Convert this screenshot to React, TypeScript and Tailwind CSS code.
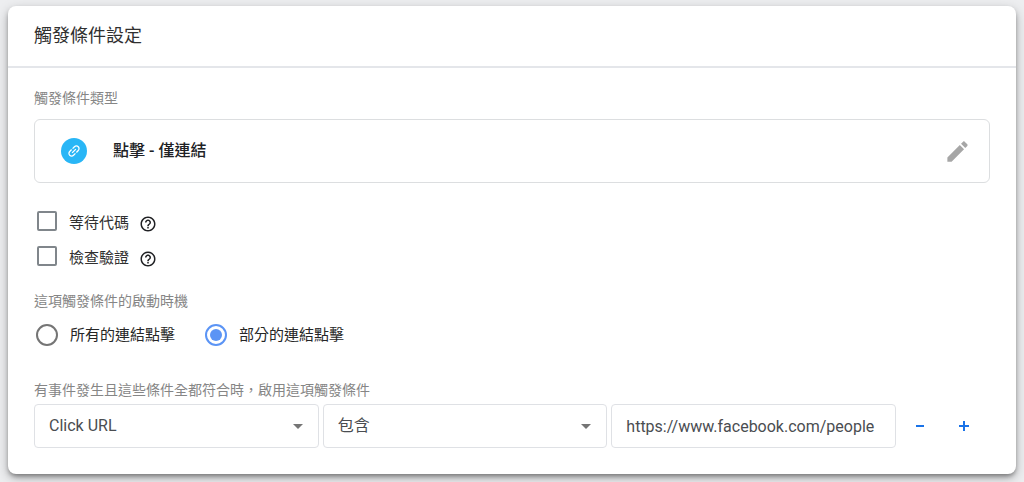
import { useState } from "react";
import type { ReactNode } from "react";

function HelpIcon() {
  return (
    <svg className="mt-0.5 size-[18px] text-[#202124]" viewBox="0 0 24 24" fill="currentColor" aria-hidden="true">
      <path d="M11 18h2v-2h-2v2zm1-16C6.48 2 2 6.48 2 12s4.48 10 10 10 10-4.48 10-10S17.52 2 12 2zm0 18c-4.41 0-8-3.59-8-8s3.59-8 8-8 8 3.59 8 8-3.59 8-8 8zm0-14c-2.21 0-4 1.79-4 4h2c0-1.1.9-2 2-2s2 .9 2 2c0 2-3 1.75-3 5h2c0-2.25 3-2.5 3-5 0-2.21-1.79-4-4-4z" />
    </svg>
  );
}

function SectionLabel({ children }: { children: ReactNode }) {
  return <h2 className="text-sm leading-5 text-[#868686]">{children}</h2>;
}

function CheckRow({ id, label }: { id: string; label: string }) {
  return (
    <div className="flex h-[35px] items-center pl-[3px]">
      <input
        id={id}
        type="checkbox"
        className="mb-1 size-5 shrink-0 appearance-none rounded-xs border-2 border-[#80868b] bg-white checked:bg-[#5b94f5]"
      />
      <label htmlFor={id} className="pl-3 text-[15px] leading-6 text-[#303030]">
        {label}
      </label>
      <button type="button" aria-label={`${label}說明`} className="ml-2.5">
        <HelpIcon />
      </button>
    </div>
  );
}

type RadioProps = { id: string; label: string; checked: boolean; onChange: () => void };

function RadioItem({ id, label, checked, onChange }: RadioProps) {
  return (
    <div className="flex items-center">
      <input
        id={id}
        type="radio"
        name="fire-on"
        checked={checked}
        onChange={onChange}
        className="grid size-[22px] shrink-0 appearance-none place-items-center rounded-full border-2 border-[#757575] bg-white before:hidden before:size-3 before:rounded-full before:bg-[#5b94f5] before:content-[''] checked:border-[#5b94f5] checked:before:block"
      />
      <label htmlFor={id} className="pl-3 text-[15px] leading-6 text-[#262626]">
        {label}
      </label>
    </div>
  );
}

function SelectField({ label, options }: { label: string; options: string[] }) {
  return (
    <div className="relative">
      <select
        aria-label={label}
        className="h-11 w-full appearance-none rounded-sm border border-[#dfe1e5] bg-white pr-10 pl-3.5 text-base text-[#4a4d51]"
      >
        {options.map((o) => (
          <option key={o}>{o}</option>
        ))}
      </select>
      <svg className="pointer-events-none absolute top-5 right-4 h-[5px] w-2.5 text-[#757575]" viewBox="0 0 10 5" fill="currentColor" aria-hidden="true">
        <path d="M0 0h10L5 5z" />
      </svg>
    </div>
  );
}

export default function App() {
  const [fireOn, setFireOn] = useState<"all" | "some">("some");
  const [url, setUrl] = useState("https://www.facebook.com/people");

  return (
    <div className="min-h-screen bg-[#edeef0] px-2 pt-1.5 pb-2 font-['Roboto','Noto_Sans_CJK_TC',sans-serif]">
      <main className="rounded-lg bg-white pb-[26px] shadow-[0_3px_5px_-1px_rgba(0,0,0,0.4),0_4px_12px_rgba(0,0,0,0.25)]">
        <header className="border-b-2 border-[#e4e6ea] px-[26px] py-4">
          <h1 className="text-lg leading-7 text-[#303030]">觸發條件設定</h1>
        </header>

        <form className="px-[26px] pt-5" onSubmit={(e) => e.preventDefault()}>
          <SectionLabel>觸發條件類型</SectionLabel>
          <div className="mt-[11px] flex h-16 items-center rounded-md border border-[#dcdee0] pr-[18px] pl-[26px]">
            <span className="flex size-[26px] items-center justify-center rounded-full bg-[#29b6f6]">
              <svg className="size-4 -rotate-45 text-white" viewBox="0 0 24 24" fill="currentColor" aria-hidden="true">
                <path d="M3.9 12c0-1.71 1.39-3.1 3.1-3.1h4V7H7c-2.76 0-5 2.24-5 5s2.24 5 5 5h4v-1.9H7c-1.71 0-3.1-1.39-3.1-3.1zM8 13h8v-2H8v2zm9-6h-4v1.9h4c1.71 0 3.1 1.39 3.1 3.1s-1.39 3.1-3.1 3.1h-4V17h4c2.76 0 5-2.24 5-5s-2.24-5-5-5z" />
              </svg>
            </span>
            <span className="flex-1 pl-[26px] text-base font-medium text-[#202124]">點擊 - 僅連結</span>
            <button type="button" aria-label="編輯觸發條件類型">
              <svg className="size-[27px] text-[#a6a6a6]" viewBox="0 0 24 24" fill="currentColor" aria-hidden="true">
                <path d="M3 17.25V21h3.75L17.81 9.94l-3.75-3.75L3 17.25zM20.71 7.04c.39-.39.39-1.02 0-1.41l-2.34-2.34c-.39-.39-1.02-.39-1.41 0l-1.83 1.83 3.75 3.75 1.83-1.83z" />
              </svg>
            </button>
          </div>

          <div className="mt-[22px]">
            <CheckRow id="wait-for-tags" label="等待代碼" />
            <CheckRow id="check-validation" label="檢查驗證" />
          </div>

          <div className="mt-4">
            <SectionLabel>這項觸發條件的啟動時機</SectionLabel>
            <div className="mt-3 flex gap-[30px] pl-0.5">
              <RadioItem id="fire-all" label="所有的連結點擊" checked={fireOn === "all"} onChange={() => setFireOn("all")} />
              <RadioItem id="fire-some" label="部分的連結點擊" checked={fireOn === "some"} onChange={() => setFireOn("some")} />
            </div>
          </div>

          <div className="mt-[33px]">
            <SectionLabel>有事件發生且這些條件全都符合時，啟用這項觸發條件</SectionLabel>
            <div className="mt-1 flex items-center">
              <div className="grid flex-1 grid-cols-3 gap-1">
                <SelectField label="變數" options={["Click URL", "Click Text", "Page URL"]} />
                <SelectField label="運算子" options={["包含", "等於", "開頭為"]} />
                <input
                  type="text"
                  aria-label="值"
                  value={url}
                  onChange={(e) => setUrl(e.target.value)}
                  className="h-11 w-full rounded-sm border border-[#dfe1e5] bg-white px-3.5 text-base text-[#4a4d51]"
                />
              </div>
              <div className="flex pr-1 pl-0.5">
                <button type="button" aria-label="移除條件" className="flex h-11 w-11 items-center justify-center text-[#1a73e8]">
                  <svg className="size-2.5" viewBox="0 0 10 10" fill="currentColor" aria-hidden="true">
                    <path d="M1 4h8v2H1z" />
                  </svg>
                </button>
                <button type="button" aria-label="新增條件" className="flex h-11 w-11 items-center justify-center text-[#1a73e8]">
                  <svg className="size-2.5" viewBox="0 0 10 10" fill="currentColor" aria-hidden="true">
                    <path d="M4 0h2v4h4v2H6v4H4V6H0V4h4z" />
                  </svg>
                </button>
              </div>
            </div>
          </div>
        </form>
      </main>
    </div>
  );
}
